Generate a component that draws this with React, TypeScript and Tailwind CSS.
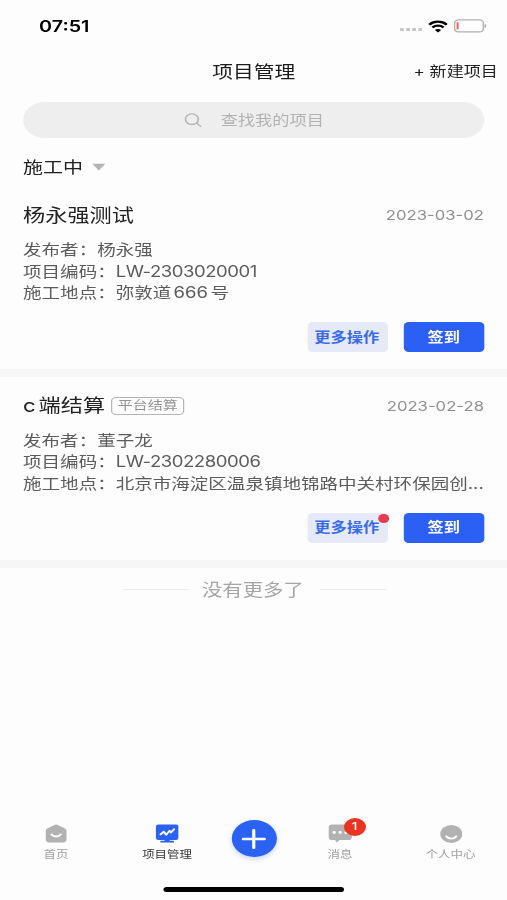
import React from 'react';

type Project = {
  title: string;
  tag?: string;
  date: string;
  publisher: string;
  code: string;
  address: string;
  hasNotice?: boolean;
};

const projects: Project[] = [
  {
    title: '杨永强测试',
    date: '2023-03-02',
    publisher: '杨永强',
    code: 'LW-2303020001',
    address: '弥敦道666号',
  },
  {
    title: 'c端结算',
    tag: '平台结算',
    date: '2023-02-28',
    publisher: '董子龙',
    code: 'LW-2302280006',
    address: '北京市海淀区温泉镇地锦路中关村环保园创...',
    hasNotice: true,
  },
];

const WifiIcon = () => (
  <svg width="16" height="13" viewBox="0 0 16 13" fill="none" stroke="#000" strokeWidth="2.3">
    <path d="M0.8 4.7C4.9 0.7 11.1 0.7 15.2 4.7" />
    <path d="M3.4 7.5C6 5.1 10 5.1 12.6 7.5" />
    <path d="M8 12.6L5.4 10C6.8 8.6 9.2 8.6 10.6 10Z" fill="#000" stroke="none" />
  </svg>
);

const BatteryIcon = () => (
  <svg width="28" height="14" viewBox="0 0 28 14">
    <rect x="0.6" y="0.9" width="23.6" height="12" rx="3.2" fill="#fff" stroke="#b0b0b0" strokeWidth="1.2" />
    <rect x="2.3" y="3" width="1.6" height="7.6" rx="0.8" fill="#ff5a55" />
    <path d="M25.3 4.9C27 5.6 27 8.2 25.3 8.9Z" fill="#a8a8a8" />
  </svg>
);

const HomeIcon = () => (
  <svg width="18" height="19" viewBox="0 0 18 19">
    <path d="M7.7 0.9Q9 0.1 10.3 0.9L16.3 4.5Q17.5 5.3 17.5 6.7V15.6Q17.5 18.4 14.7 18.4H3.3Q0.5 18.4 0.5 15.6V6.7Q0.5 5.3 1.7 4.5Z" fill="#b2b2b2" />
    <path d="M5.3 10.6C7 13.2 11 13.2 12.7 10.6" fill="none" stroke="#fff" strokeWidth="1.9" strokeLinecap="round" />
  </svg>
);

const BoardIcon = () => (
  <svg width="20" height="19" viewBox="0 0 20 19">
    <rect x="0.8" y="0.5" width="18.4" height="15.4" rx="2" fill="#2c62f4" />
    <path d="M8 15H12V17H8Z" fill="#2c62f4" />
    <rect x="4.3" y="16.8" width="11.4" height="1.8" rx="0.9" fill="#2c62f4" />
    <path d="M4.6 10.4L7.3 7.7L9.2 10.9L12 6.6L13.1 8.6L15.7 5.2" fill="none" stroke="#fff" strokeWidth="1.7" strokeLinecap="round" strokeLinejoin="round" />
  </svg>
);

const MessageIcon = () => (
  <svg width="20" height="19" viewBox="0 0 20 19">
    <path d="M3.2 0.5H16.6Q19.4 0.5 19.4 3.3V13.2Q19.4 16 16.6 16H9.4L7 18.5L5.6 16H3.2Q0.4 16 0.4 13.2V3.3Q0.4 0.5 3.2 0.5Z" fill="#b2b2b2" />
    <circle cx="4.9" cy="8.5" r="1.4" fill="#fff" />
    <circle cx="9.8" cy="8.5" r="1.4" fill="#fff" />
    <circle cx="14.7" cy="8.5" r="1.4" fill="#fff" />
  </svg>
);

const UserIcon = () => (
  <svg width="19" height="19" viewBox="0 0 19 19">
    <circle cx="9.9" cy="9.9" r="9" fill="#b2b2b2" />
    <path d="M6 12.4C7.8 15.4 12 15.4 13.8 12.4" fill="none" stroke="#fff" strokeWidth="1.9" strokeLinecap="round" />
  </svg>
);

const Field: React.FC<{ label: string; value: string; className?: string }> = ({ label, value, className = '' }) => (
  <p className="whitespace-nowrap">{label}：<span className={className}>{value}</span></p>
);

const ProjectCard: React.FC<{ project: Project }> = ({ project }) => (
  <article className="h-[190.5px] border-b-8 border-[#f6f6f6] px-[18.9px] pt-[14px]">
    <div className="flex h-[30px] items-center">
      <h2 className="text-[18.2px] text-[#222]">{project.title}</h2>
      {project.tag && (
        <span className="ml-[5px] flex h-[18.5px] w-[60px] items-center justify-center rounded-[4px] border border-[#b5b5b5] pt-px text-[12.3px] leading-none text-[#929292]">
          {project.tag}
        </span>
      )}
      <time className="ml-auto text-[13.7px] text-[#8f8f8f]">{project.date}</time>
    </div>
    <div className="mt-[8.5px] text-[15.2px] leading-[21.6px] text-[#5c5c5c]">
      <Field label="发布者" value={project.publisher} />
      <Field label="项目编码" value={project.code} className="tracking-[-0.38px]" />
      <Field label="施工地点" value={project.address} />
    </div>
    <div className="mt-[18.5px] flex justify-end gap-[13px] text-[13.3px] font-bold">
      <button className="relative h-[30px] w-[66px] rounded-[4px] bg-[#e6e9f7] pr-[1px] pt-px text-[#386bea]">
        更多操作
        {project.hasNotice && <i className="absolute -right-[1px] top-px size-[9px] rounded-full bg-[#e63a50]" />}
      </button>
      <button className="h-[30px] w-[66px] rounded-[4px] bg-[#2c60f5] pt-px text-white">签到</button>
    </div>
  </article>
);

const Tab: React.FC<{ icon: React.ReactNode; label: string; className: string }> = ({ icon, label, className }) => (
  <div className={`flex flex-col items-center pt-[3.5px] ${className}`}>
    {icon}
    <span className="mt-[3px] text-[10.2px] leading-[16px]">{label}</span>
  </div>
);

const App: React.FC = () => (
  <div className="h-[900px] w-[507px] overflow-hidden bg-[#fdfdfd]">
    {/* wide-screen rendering: content is laid out at 415.6px and stretched sideways */}
    <div className="flex h-[900px] w-[415.6px] origin-top-left scale-x-[1.22] flex-col font-['Inter','Noto_Sans_CJK_SC',sans-serif] [text-autospace:normal]">
      <div className="flex h-[52px] items-center pl-[32px] pr-[15.5px]">
        <span className="text-[16.2px] font-semibold text-black">07:51</span>
        <div className="ml-auto flex items-center">
          <div className="mr-[5px] mt-[7px] flex gap-[2px]">
            <i className="size-[3px] bg-[#c6c6c6]" />
            <i className="size-[3px] bg-[#c6c6c6]" />
            <i className="size-[3px] bg-[#c6c6c6]" />
            <i className="size-[3px] bg-[#c6c6c6]" />
          </div>
          <WifiIcon />
          <span className="ml-[5px]"><BatteryIcon /></span>
        </div>
      </div>

      <header className="grid h-[38px] grid-cols-[1fr_auto_1fr] items-center pl-[8px] pr-[7.5px]">
        <span />
        <h1 className="pt-[3px] text-[17px] text-[#1c1c1c]">项目管理</h1>
        <button className="pb-[2px] text-right text-[14px] text-[#222]">+ 新建项目</button>
      </header>

      <div className="mx-[18.9px] mt-[12px] flex h-[36px] shrink-0 items-center rounded-full bg-[#eeeeee] pl-[132px] text-[14.1px] text-[#b2b2b2]">
        <svg width="15" height="16" viewBox="0 0 15 16" fill="none" stroke="#b5b5b5" strokeWidth="1.3" strokeLinecap="round">
          <circle cx="6.3" cy="7.2" r="5.3" />
          <path d="M10.2 11.2L13.6 14.4" />
        </svg>
        <span className="ml-[15px]">查找我的项目</span>
      </div>

      <div className="mt-[14px] flex h-[30px] shrink-0 items-center px-[18.9px] text-[16.4px] text-[#222]">
        施工中
        <svg className="ml-[7px]" width="12" height="8" viewBox="0 0 12 8">
          <path d="M0.6 0.8H11.4L6 7.6Z" fill="#b4b4b4" />
        </svg>
      </div>

      <main className="-mt-[1px] pt-[5.5px]">
        {projects.map((project) => <ProjectCard key={project.code} project={project} />)}
        <div className="flex h-[44px] items-center justify-center gap-[12px] pl-[2px] text-[16.7px] text-[#a6a6a6]">
          <span className="h-px w-[54px] bg-[#ebebeb]" />
          <span className="-ml-px pr-px pt-[3px]">没有更多了</span>
          <span className="h-px w-[55px] bg-[#ebebeb]" />
        </div>
      </main>

      <nav className="mt-auto flex h-[67px] shrink-0 text-[#a0a0a0]">
        <Tab className="w-[91.8px]" icon={<HomeIcon />} label="首页" />
        <Tab className="w-[90.2px] text-[#333]" icon={<BoardIcon />} label="项目管理" />
        <div className="flex w-[52.4px] justify-center">
          <button className="flex size-[37px] items-center justify-center rounded-full bg-[#2c62f4] shadow-[0_2px_5px_rgba(44,98,244,0.25)]">
            <svg width="20" height="20" viewBox="0 0 20 20" stroke="#fff" strokeWidth="2.6" strokeLinecap="round">
              <path d="M10 1.3V18.7M1.3 10H18.7" />
            </svg>
          </button>
        </div>
        <Tab
          className="w-[88.6px]"
          icon={
            <span className="relative">
              <MessageIcon />
              <b className="absolute -top-[6px] left-[13px] flex size-[18px] items-center justify-center rounded-full bg-[#ea3323] text-[11px] font-medium text-white">1</b>
            </span>
          }
          label="消息"
        />
        <Tab className="w-[92.6px]" icon={<UserIcon />} label="个人中心" />
      </nav>
      <div className="mb-[8px] ml-[134px] h-[5px] w-[148px] shrink-0 rounded-full bg-black" />
    </div>
  </div>
);

export default App;
